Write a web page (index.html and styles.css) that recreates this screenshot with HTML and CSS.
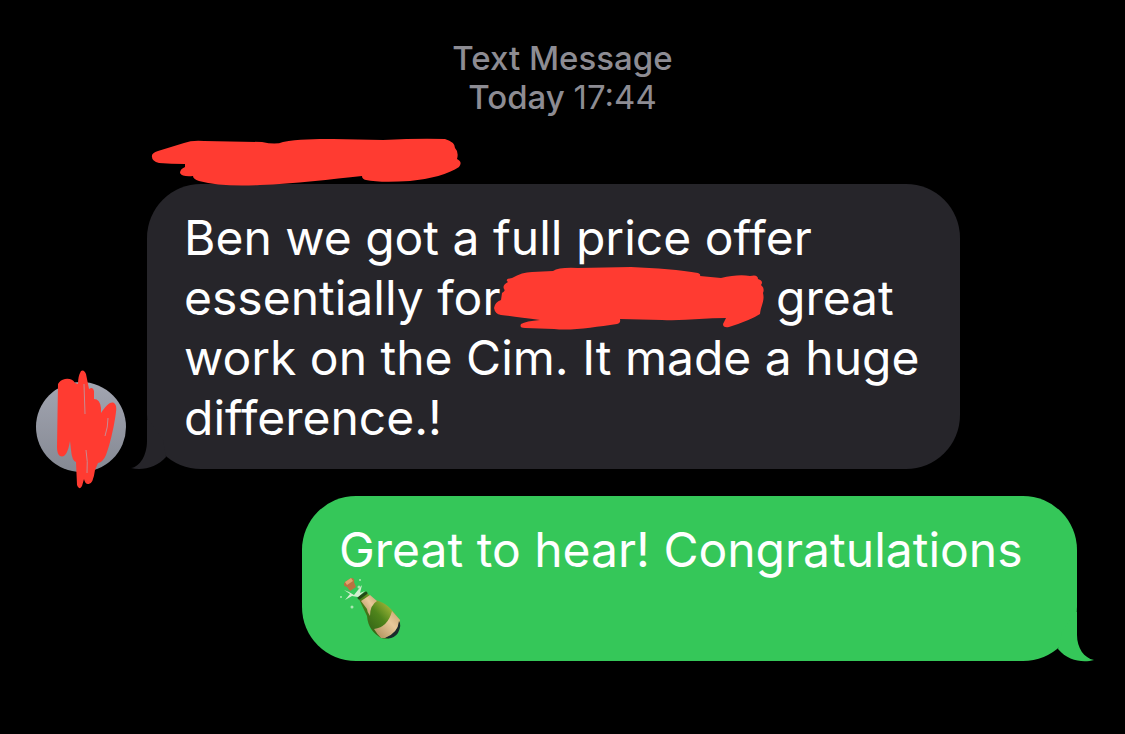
FILE: index.html
```html
<!DOCTYPE html>
<html lang="en">
<head>
<meta charset="utf-8">
<meta name="viewport" content="width=device-width, initial-scale=1">
<title>Messages</title>
<link rel="stylesheet" href="styles.css">
</head>
<body>
<main class="thread">
  <header class="stamp">
    <div>Text Message</div>
    <div>Today <time class="time">17:44</time></div>
  </header>

  <section class="incoming">
    <div class="avatar">
      <svg class="avatar-mark" viewBox="56 369 64 120" aria-hidden="true">
        <path fill="#ff3b31" d="M58 384Q60 380 65 379Q72 378 75 383L78 384Q78 376 81 371Q84 369 86 374L89 389Q93 386 94 391V399Q100 399 101 408V413C106 406 110 401 114 403Q117 405 116 412C114 428 109 448 106 455Q103 462 98 463L95 470Q93 485 88 484Q85 484 84 479L82 486Q79 491 77 485L76 462Q72 461 71 450L70 441Q67 459 60 456Q57 454 57 447Z"/>
        <path fill="none" stroke="#c78b91" stroke-width="1" d="M84 384L85 414M108 418Q108 427 105 436M86 450Q88 462 87 473"/>
      </svg>
    </div>
    <div class="incoming-body">
      <svg class="sender" viewBox="151 138 310 48" role="img" aria-label="Name hidden">
        <path fill="#ff3b31" d="M152 157Q151 153 158 151L184 143Q192 140 204 141L262 142Q276 145 283 142C298 139 315 139 333 139L383 140Q420 138 445 139Q455 142 455 148Q459 152 457 159Q463 162 459 167C449 174 430 179 410 181Q380 183 366 180Q362 179 362 176C332 179 294 184 260 185Q222 187 199 181Q193 179 193 176Q182 177 180 173Q180 169 185 167L185 164Q171 164 159 163Q152 161 152 157Z"/>
      </svg>
      <p class="bubble gray">Ben we got a full price offer<br>essentially for<svg class="redacted" viewBox="493 266 270 66" role="img" aria-label="Text hidden"><path fill="#ff3b31" d="M493 309Q494 303 500 301L501 294Q505 292 503 290Q501 286 507 283Q503 280 511 279Q521 273 531 273L552 272Q558 268 577 269L630 268C654 269 681 271 697 274Q700 275 699 277L720 279Q737 275 749 277Q757 275 757 280Q763 282 760 286Q764 289 762 294C764 302 760 306 759 315Q750 321 728 328Q722 329 722 325L725 319C704 319 684 322 661 321L619 320Q620 324 616 325C594 328 571 332 553 330L524 329Q518 329 520 325Q525 322 539 321C523 319 509 317 500 316Q494 315 493 309Z"/></svg> great<br>work on the Cim. It made a huge<br>difference.!<svg class="tail tail-left" viewBox="0 0 40 50" aria-hidden="true"><path fill="#26252a" d="M16 0V21C16 35 9 47 0 48C12 51 26 47 35 37L32 20L18 0Z"/></svg></p>
    </div>
  </section>

  <section class="outgoing">
    <p class="bubble green">Great to hear! Congratulations<br><svg class="emoji" viewBox="0 0 64 64" role="img" aria-label="Champagne bottle">
      <defs>
        <linearGradient id="glass" x1="0" y1="1" x2="1" y2="0"><stop offset="0" stop-color="#1e4b12"/><stop offset=".5" stop-color="#4f841b"/><stop offset=".75" stop-color="#a5b83a"/><stop offset="1" stop-color="#2a5814"/></linearGradient>
        <linearGradient id="label" x1="0" y1="1" x2="1" y2="0"><stop offset="0" stop-color="#a98955"/><stop offset=".6" stop-color="#e8c99a"/><stop offset="1" stop-color="#c5a16c"/></linearGradient>
      </defs>
      <path fill="url(#glass)" d="M19 19L27 14L35 22C44 23 51 29 56 36L61 42Q62 51 55 58Q49 62 42 60C34 55 29 49 28 38Z"/>
      <path fill="url(#label)" d="M22 23L31 17L38 23Q31 27 31 38Q28 34 28 31Z"/>
      <path fill="url(#label)" d="M35 51Q49 49 53 33L61 42Q60 54 47 60L42 60Q38 56 35 51Z"/>
      <path fill="#1b2b2c" d="M46 60Q59 55 60 43Q63 47 59 55Q54 62 46 60Z"/>
      <path fill="none" stroke="#214b18" stroke-width="3" stroke-linecap="round" d="M20 20L27 15"/>
      <path fill="#d5eed1" d="M10 14L15 17L23 7L21 15L26 13L19 19L13 18L6 22L11 16L5 12Z"/>
      <path fill="#ba7240" d="M6 4L12 0Q16 0 15 4L17 9L11 13L8 9Q3 8 6 4Z"/>
      <path fill="#e1a36c" d="M6 4L12 0L14 3L8 7Z"/>
      <g fill="#a9e7b2"><circle cx="21" cy="2" r="1"/><circle cx="2" cy="19" r="1"/><circle cx="13" cy="29" r="1.5"/><circle cx="20" cy="9" r="1.5"/></g>
    </svg><svg class="tail tail-right" viewBox="0 0 40 50" aria-hidden="true"><path fill="#35c759" d="M21 0V23C21 36 28 46 38 48C27 51 12 49 2 37L6 20L19 0Z"/></svg></p>
  </section>
</main>
</body>
</html>
```
FILE: styles.css
```css
* { box-sizing: border-box; }
body {
  margin: 0;
  background: #000;
  font-family: Inter, "Liberation Sans", sans-serif;
}
.thread {
  display: flex;
  flex-direction: column;
  padding: 39px 0 72px;
}
.stamp {
  color: #8d8c93;
  font-size: 33px;
  font-weight: 500;
  line-height: 39px;
  text-align: center;
}
.time { font-weight: 400; }
.incoming {
  display: flex;
  align-items: flex-end;
  gap: 21px;
  padding: 21px 165px 0 36px;
}
.avatar {
  position: relative;
  flex: none;
  width: 90px;
  height: 90px;
  margin-bottom: -3px;
  border-radius: 50%;
  background: linear-gradient(#a2a5b1, #858993);
}
.avatar-mark {
  position: absolute;
  left: 20px;
  top: -13px;
  width: 64px;
  height: 120px;
}
.incoming-body { flex: 1; min-width: 0; }
.sender {
  position: relative;
  z-index: 1;
  display: block;
  width: 310px;
  height: 48px;
  margin: 0 0 -2px 4px;
}
.bubble {
  position: relative;
  margin: 0;
  padding: 24px 37px 21px;
  border-radius: 54px;
  color: #fff;
  font-size: 48px;
  line-height: 60px;
}
.gray { background: #26252a; }
.green { background: #35c759; }
.redacted {
  width: 270px;
  height: 66px;
  margin: -16px -2px -16px -6px;
  vertical-align: 0;
}
.outgoing { padding: 27px 48px 0 302px; }
.emoji {
  width: 64px;
  height: 64px;
  margin: -8px 0;
  vertical-align: -7px;
}
.tail {
  position: absolute;
  bottom: -1px;
  width: 40px;
  height: 50px;
}
.tail-left { left: -16px; }
.tail-right { right: -19px; }
```
